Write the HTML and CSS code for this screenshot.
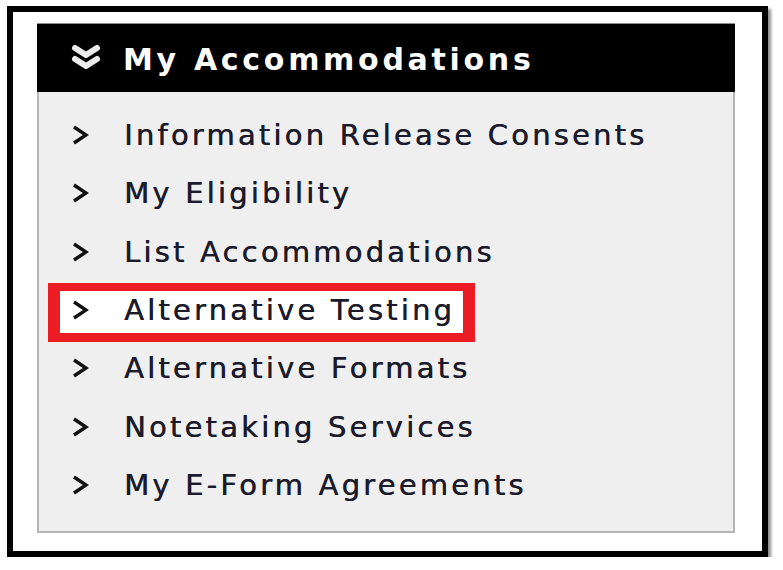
FILE: index.html
```html
<!DOCTYPE html>
<html lang="en">
<head>
    <meta charset="UTF-8">
    <meta name="viewport" content="width=device-width, initial-scale=1.0">
    <title>My Accommodations</title>
    <link rel="stylesheet" href="styles.css">
</head>
<body>
    <div class="frame">
        <div class="panel">
            <div class="panel-head">
                <svg class="head-icon" width="30" height="28" viewBox="0 0 30 28">
                    <polyline points="4,4 15,11 26,4" />
                    <polyline points="4,15 15,22 26,15" />
                </svg>
                <span class="head-title">My Accommodations</span>
            </div>
            <ul class="menu">
                <li><svg class="arrow" viewBox="0 0 18 22"><polyline points="3,3 15,11 3,19" /></svg><a href="#">Information Release Consents</a></li>
                <li><svg class="arrow" viewBox="0 0 18 22"><polyline points="3,3 15,11 3,19" /></svg><a href="#">My Eligibility</a></li>
                <li><svg class="arrow" viewBox="0 0 18 22"><polyline points="3,3 15,11 3,19" /></svg><a href="#">List Accommodations</a></li>
                <li class="marked"><svg class="arrow" viewBox="0 0 18 22"><polyline points="3,3 15,11 3,19" /></svg><a href="#">Alternative Testing</a></li>
                <li><svg class="arrow" viewBox="0 0 18 22"><polyline points="3,3 15,11 3,19" /></svg><a href="#">Alternative Formats</a></li>
                <li><svg class="arrow" viewBox="0 0 18 22"><polyline points="3,3 15,11 3,19" /></svg><a href="#">Notetaking Services</a></li>
                <li><svg class="arrow" viewBox="0 0 18 22"><polyline points="3,3 15,11 3,19" /></svg><a href="#">My E-Form Agreements</a></li>
            </ul>
        </div>
    </div>
</body>
</html>
```

FILE: styles.css
```css
body {
    margin: 0;
    background: #fff;
    font-family: "DejaVu Sans", Verdana, sans-serif;
}
.frame {
    margin: 6px 0 0 7px;
    width: 749px;
    height: 539px;
    border: 6px solid #000;
    background: #fff;
    box-shadow: 3px 3px 3px rgba(0, 0, 0, 0.45);
}
.panel {
    margin: 11px 0 0 24px;
    width: 698px;
}
.panel-head {
    display: flex;
    align-items: center;
    height: 68px;
    background: #000;
    border-top: 1px solid #8c8c8c;
    color: #fff;
}
.head-icon {
    margin-left: 34px;
    margin-top: -1px;
    fill: none;
    stroke: #ececec;
    stroke-width: 6;
    stroke-linecap: round;
    stroke-linejoin: round;
}
.head-title {
    margin-left: 22px;
    margin-top: 3px;
    font-weight: bold;
    font-size: 30px;
    letter-spacing: 3.7px;
}
.menu {
    list-style: none;
    margin: 0;
    padding: 14px 0 17px;
    background: #efefef;
    border: 2px solid #b4b4b4;
    border-top: none;
}
.menu li {
    display: flex;
    align-items: center;
    height: 58.33px;
}
.arrow {
    width: 18px;
    height: 22px;
    margin-left: 32px;
    fill: none;
    stroke: #111;
    stroke-width: 3.4;
}
.menu a {
    margin-left: 35px;
    color: #1b1b2b;
    text-decoration: none;
    font-size: 29px;
    letter-spacing: 3.2px;
    text-shadow: 0.4px 0 0 #1b1b2b;
}
.menu li.marked {
    position: relative;
    z-index: 0;
}
.menu li.marked::before {
    content: "";
    position: absolute;
    z-index: -1;
    left: 9px;
    top: 2px;
    width: 403px;
    height: 42px;
    background: #fff;
    border-style: solid;
    border-color: #ec1c24;
    border-width: 8px 12px 9px 12px;
}
```
